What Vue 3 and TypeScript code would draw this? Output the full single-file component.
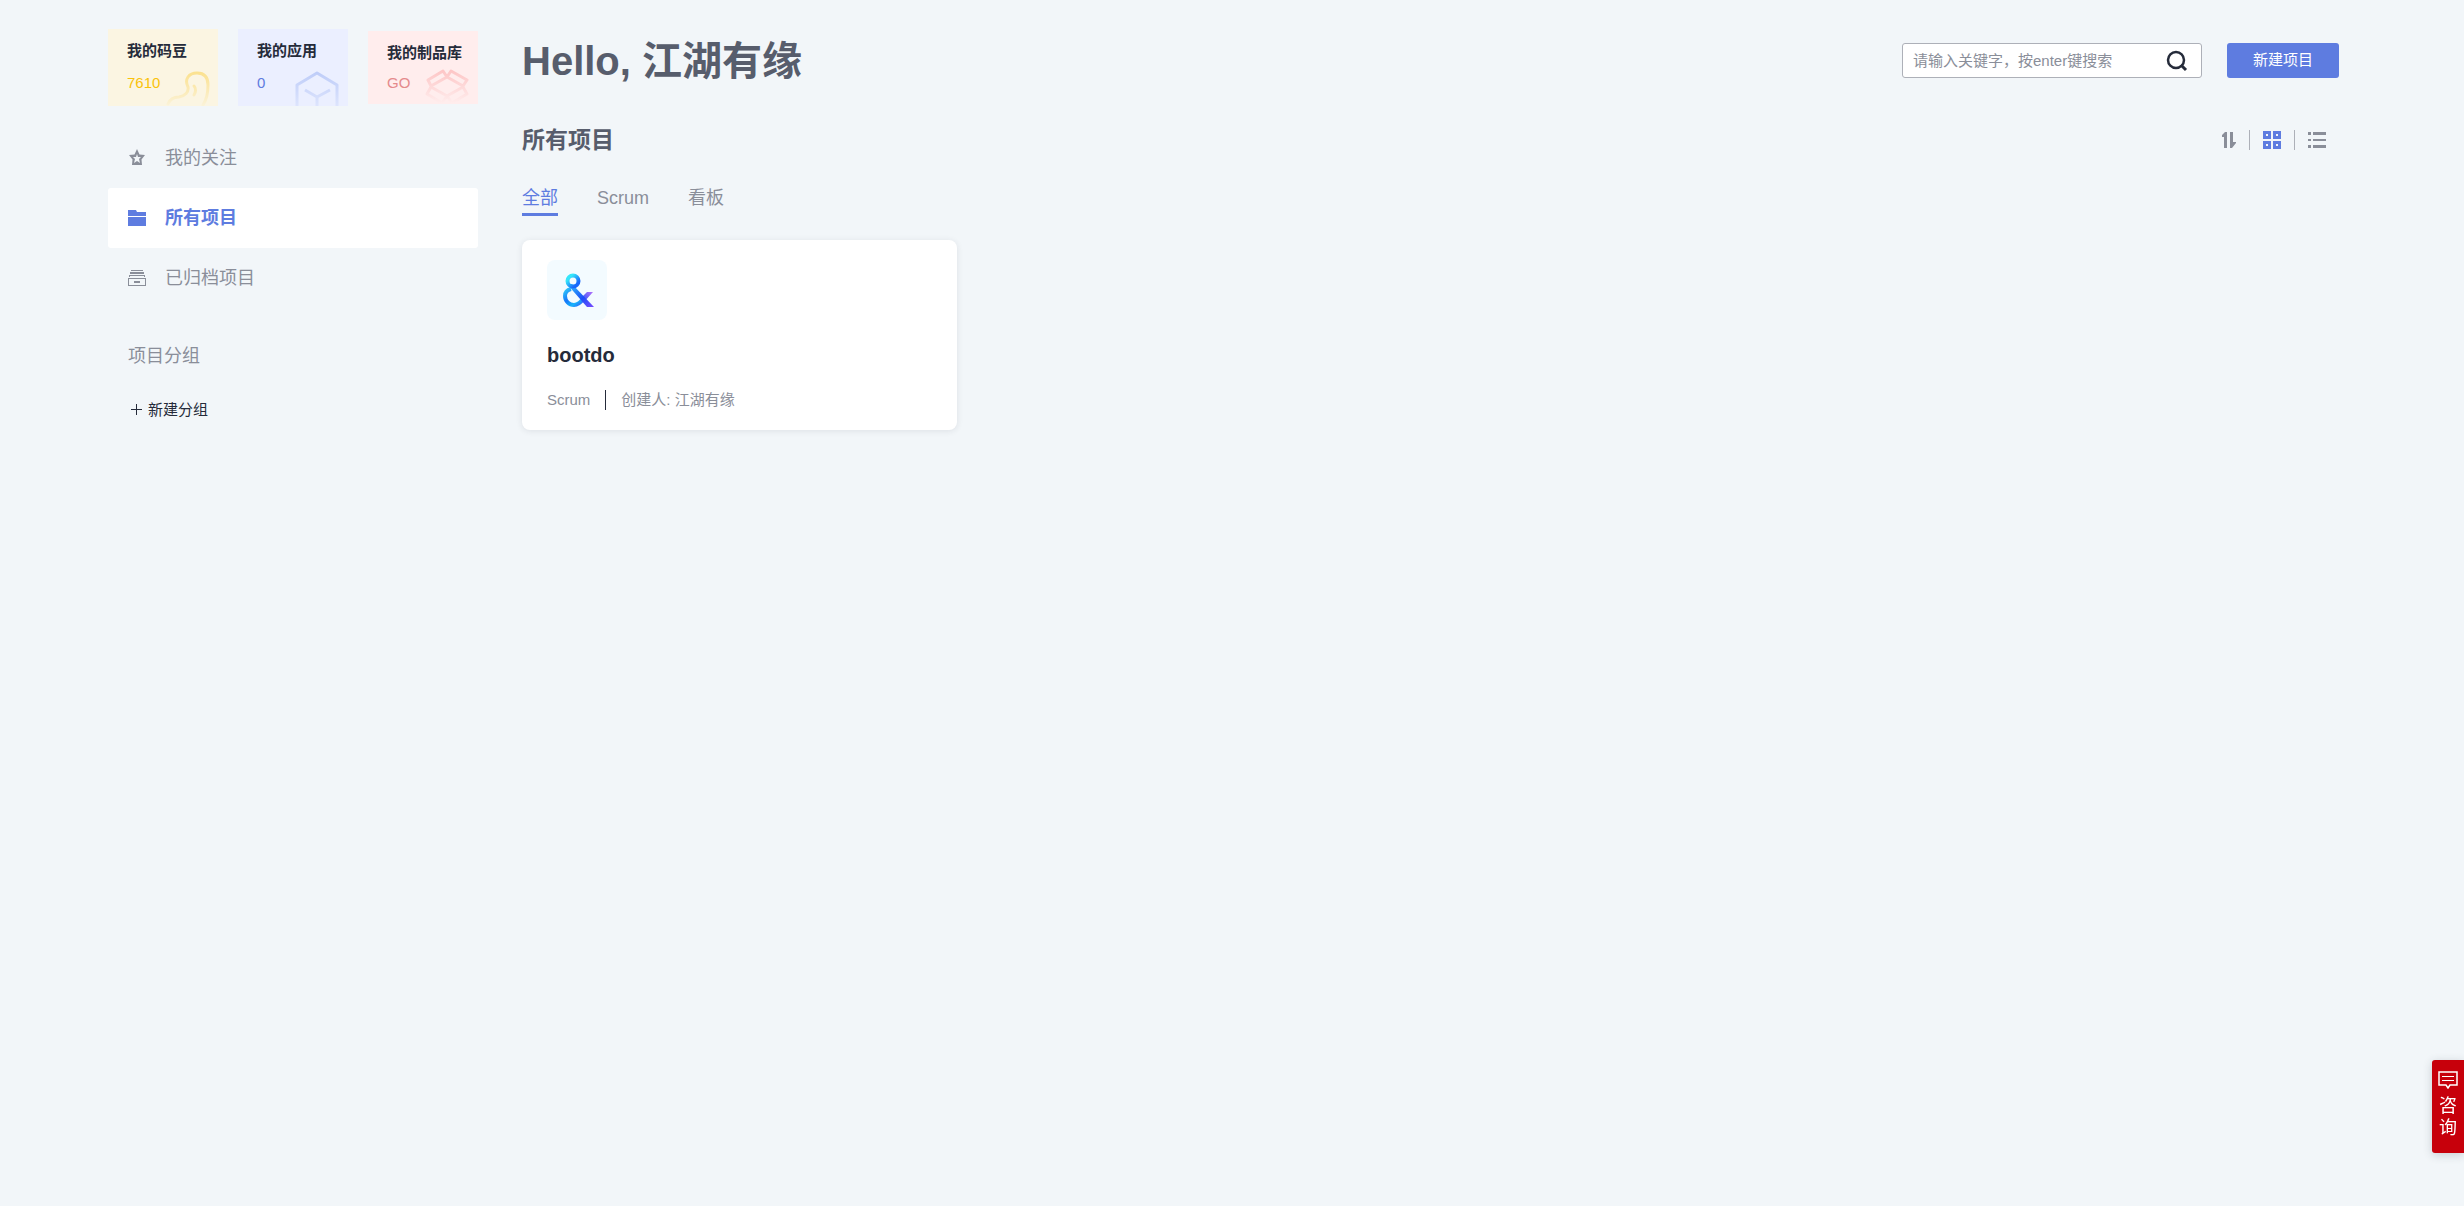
<script setup lang="ts">
import { ref } from 'vue'

interface Tile {
  key: string
  title: string
  value: string
}

interface Tab {
  key: string
  label: string
}

const tiles: Tile[] = [
  { key: 'bean', title: '我的码豆', value: '7610' },
  { key: 'app', title: '我的应用', value: '0' },
  { key: 'repo', title: '我的制品库', value: 'GO' },
]

const tabs: Tab[] = [
  { key: 'all', label: '全部' },
  { key: 'scrum', label: 'Scrum' },
  { key: 'kanban', label: '看板' },
]

const activeTab = ref('all')
const keyword = ref('')
</script>

<template>
  <div class="page">
    <aside class="side">
      <div class="tiles">
        <a v-for="tile in tiles" :key="tile.key" href="#" class="tile" :class="tile.key">
          <span class="tile-title">{{ tile.title }}</span>
          <span class="tile-value">{{ tile.value }}</span>
          <svg v-if="tile.key === 'bean'" class="tile-art" width="46" height="38" viewBox="0 0 46 38" fill="none" stroke-width="3" stroke-linecap="round">
            <defs>
              <linearGradient id="beanFade" gradientUnits="userSpaceOnUse" x1="0" y1="2" x2="0" y2="38">
                <stop offset="0" stop-color="#fbe08a" />
                <stop offset="1" stop-color="#fbe08a" stop-opacity="0.1" />
              </linearGradient>
            </defs>
            <path d="M3 36C5 31 9 29 14 29C20 28 24 24 23 19C19 11 24 5 32 5C40 5 43 10 43 17C43 25 42 31 38 37" stroke="url(#beanFade)" />
            <path d="M29 18C31 20 31 24 29 27" stroke="url(#beanFade)" />
          </svg>
          <svg v-else-if="tile.key === 'app'" class="tile-art" width="46" height="38" viewBox="0 0 46 38" fill="none" stroke-width="3" stroke-linejoin="round">
            <defs>
              <linearGradient id="appFade" gradientUnits="userSpaceOnUse" x1="0" y1="2" x2="0" y2="40">
                <stop offset="0" stop-color="#bccbf8" />
                <stop offset="1" stop-color="#bccbf8" stop-opacity="0.25" />
              </linearGradient>
            </defs>
            <path d="M2 40V17L22 5L42 17V40M10 22L22 29L35 22M22 29V40" stroke="url(#appFade)" />
          </svg>
          <svg v-else class="tile-art" width="46" height="38" viewBox="0 0 46 38" fill="none" stroke-width="3" stroke-linejoin="round">
            <defs>
              <linearGradient id="repoFade" gradientUnits="userSpaceOnUse" x1="0" y1="2" x2="0" y2="37">
                <stop offset="0" stop-color="#fdc3c3" />
                <stop offset="1" stop-color="#fdc3c3" stop-opacity="0" />
              </linearGradient>
            </defs>
            <path d="M18 5L3 14L6 20L22 11ZM26 5L42 14L38 20L22 11ZM6 21L22 30L38 21M6 21L2 28L17 37L22 30L27 37L42 28L38 21" stroke="url(#repoFade)" />
          </svg>
        </a>
      </div>

      <nav class="nav">
        <a href="#" class="nav-item">
          <svg width="18" height="18" viewBox="0 0 18 18" fill="#8a8e99" fill-rule="evenodd">
            <path d="M9 0L11.500 5.500L17 6L13.500 10.500L14 16H4L4.500 10.500L1 6L6.500 5.500ZM9 5L8 8H5L7 10L6 14L9 12L12 14L11 10L13 8H10Z" />
          </svg>
          我的关注
        </a>
        <a href="#" class="nav-item active">
          <svg width="18" height="18" viewBox="0 0 18 18" fill="#5e7ce0">
            <path d="M0 1H8L9 3H18V7H0ZM0 8H18V17H0Z" />
          </svg>
          所有项目
        </a>
        <a href="#" class="nav-item">
          <svg width="18" height="18" viewBox="0 0 18 18" fill="#8a8e99">
            <path d="M3 1H15V2H3ZM2 3H16V5H2ZM1 6H17V8H16V7H2V8H1Z" />
            <path d="M0 9H18V17H0ZM1 10V16H17V10Z" fill-rule="evenodd" />
            <path d="M6 12H12V14H6Z" />
          </svg>
          已归档项目
        </a>
      </nav>

      <h2 class="group-title">项目分组</h2>
      <button type="button" class="group-add">
        <svg width="12" height="12" viewBox="0 0 12 12" fill="#252b3a">
          <path d="M5 0H6V5H11V6H6V11H5V6H0V5H5Z" />
        </svg>
        新建分组
      </button>
    </aside>

    <main class="main">
      <header class="head">
        <h1 class="hello">Hello, 江湖有缘</h1>
        <div class="actions">
          <div class="search">
            <input v-model="keyword" type="text" aria-label="搜索项目" placeholder="请输入关键字，按enter键搜索" />
            <button type="button" class="icon-btn" aria-label="搜索">
              <svg width="22" height="22" viewBox="0 0 22 22" fill="none" stroke="#252b3a" stroke-width="2.500">
                <circle cx="10" cy="10" r="8" />
                <path d="M15 15L20 20" stroke-width="3" />
              </svg>
            </button>
          </div>
          <button type="button" class="primary">新建项目</button>
        </div>
      </header>

      <div class="bar">
        <h2 class="section-title">所有项目</h2>
        <div class="views">
          <button type="button" class="icon-btn" aria-label="排序">
            <svg width="14" height="18" viewBox="0 0 14 18" fill="#8a8e99">
              <path d="M3 1H5V17H2V6H0V4ZM8 1H11V11H14V12L10 17H8Z" />
            </svg>
          </button>
          <span class="sep"></span>
          <button type="button" class="icon-btn" aria-label="卡片视图">
            <svg width="18" height="18" viewBox="0 0 18 18" fill="#5e7ce0" fill-rule="evenodd">
              <path d="M0 0H8V8H0ZM3 3V5H5V3ZM10 0H18V8H10ZM13 3V5H15V3ZM0 10H8V18H0ZM3 13V15H5V13ZM10 10H18V18H10ZM13 13V15H15V13Z" />
            </svg>
          </button>
          <span class="sep"></span>
          <button type="button" class="icon-btn" aria-label="列表视图">
            <svg width="18" height="18" viewBox="0 0 18 18" fill="#8a8e99">
              <path d="M0 1H3V4H0ZM5 1H18V4H5ZM0 8H3V10H0ZM5 8H18V10H5ZM0 14H3V17H0ZM5 14H18V17H5Z" />
            </svg>
          </button>
        </div>
      </div>

      <div class="tabs">
        <button
          v-for="tab in tabs"
          :key="tab.key"
          type="button"
          class="tab"
          :class="{ active: tab.key === activeTab }"
          @click="activeTab = tab.key"
        >
          {{ tab.label }}
        </button>
      </div>

      <section class="cards">
        <article class="card">
          <div class="logo">
            <svg width="60" height="60" viewBox="0 0 60 60" fill="none" stroke-width="4">
              <defs>
                <linearGradient id="ampTop" x1="0" y1="0" x2="1" y2="1">
                  <stop offset="0.200" stop-color="#35e6fa" />
                  <stop offset="0.800" stop-color="#1767fb" />
                </linearGradient>
                <linearGradient id="ampBowl" x1="0" y1="0" x2="1" y2="1">
                  <stop offset="0" stop-color="#2fc8f8" />
                  <stop offset="0.400" stop-color="#1677fa" />
                  <stop offset="0.700" stop-color="#16b4fa" />
                  <stop offset="1" stop-color="#3450fa" />
                </linearGradient>
                <linearGradient id="ampLeg" x1="0" y1="0" x2="1" y2="1">
                  <stop offset="0" stop-color="#33d0fb" />
                  <stop offset="0.600" stop-color="#1c4df8" />
                  <stop offset="1" stop-color="#7a4bff" />
                </linearGradient>
                <linearGradient id="ampArm" gradientUnits="userSpaceOnUse" x1="35" y1="41" x2="45" y2="32">
                  <stop offset="0" stop-color="#2456f8" />
                  <stop offset="1" stop-color="#b070fa" />
                </linearGradient>
              </defs>
              <path d="M24 29C20 30 18 32 18 36C18 41 22 45 27 45C31 45 34 42 37 38" stroke="url(#ampBowl)" />
              <path d="M34 38L40 32H46L37 42Z" fill="url(#ampArm)" stroke="none" />
              <path d="M20 24L25 24L47 47H40Z" fill="url(#ampLeg)" stroke="none" />
              <circle cx="26" cy="21" r="5.500" stroke="url(#ampTop)" />
            </svg>
          </div>
          <h3 class="card-name">bootdo</h3>
          <div class="meta">
            <span>Scrum</span>
            <span class="meta-sep"></span>
            <span>创建人: 江湖有缘</span>
          </div>
        </article>
      </section>
    </main>

    <button type="button" class="consult">
      <svg width="20" height="18" viewBox="0 0 20 18" fill="none" stroke="#fff">
        <path d="M1 1H19V14H12L10 17L8 14H1Z" stroke-width="1.500" />
        <path d="M4 5.500H16M4 9.500H16" />
      </svg>
      <span>咨</span>
      <span>询</span>
    </button>
  </div>
</template>

<style>
body {
  margin: 0;
  background: #f2f6f9;
}
</style>

<style scoped>
.page {
  box-sizing: border-box;
  display: flex;
  gap: 44px;
  min-height: 100vh;
  padding: 29px 125px 0 108px;
  background: #f2f6f9;
  color: #8a8e99;
  font-family: 'Liberation Sans', 'Noto Sans CJK SC', sans-serif;
  font-size: 15px;
  line-height: 20px;
}

button,
input {
  margin: 0;
  padding: 0;
  border: 0;
  background: none;
  color: inherit;
  font: inherit;
}

button {
  cursor: pointer;
}

a {
  color: inherit;
  text-decoration: none;
}

h1,
h2,
h3 {
  margin: 0;
}

svg {
  display: block;
  flex: none;
}

.side {
  flex: none;
  width: 370px;
}

.tiles {
  display: flex;
  align-items: center;
  gap: 20px;
}

.tile {
  position: relative;
  box-sizing: border-box;
  display: flex;
  flex: 1;
  flex-direction: column;
  gap: 12px;
  height: 77px;
  padding: 12px 0 0 19px;
  overflow: hidden;
}

.tile-title {
  color: #252b3a;
  font-weight: 700;
  white-space: nowrap;
}

.tile-art {
  position: absolute;
  right: 7px;
  bottom: 0;
}

.bean {
  background: #fbf5e2;
}

.bean .tile-value {
  color: #fac20a;
}

.app {
  background: #ebefff;
}

.app .tile-value {
  color: #5e7ce0;
}

.repo {
  gap: 10px;
  height: 73px;
  background: #ffeded;
}

.repo .tile-value {
  color: #e58a8c;
}

.nav {
  margin-top: 22px;
}

.nav-item {
  display: flex;
  align-items: center;
  gap: 19px;
  height: 60px;
  padding: 0 20px;
  border-radius: 3px;
  font-size: 18px;
}

.nav-item.active {
  background: #fff;
  color: #5e7ce0;
  font-weight: 700;
}

.group-title {
  margin: 38px 0 0 20px;
  font-size: 18px;
  font-weight: 400;
}

.group-add {
  display: flex;
  align-items: center;
  gap: 5px;
  margin: 34px 0 0 23px;
  color: #252b3a;
}

.main {
  flex: 1;
  min-width: 0;
}

.head {
  display: flex;
  align-items: center;
  justify-content: space-between;
  height: 63px;
}

.hello {
  color: #575d6c;
  font-size: 40px;
  line-height: 62px;
}

.actions {
  display: flex;
  gap: 25px;
}

.search {
  box-sizing: border-box;
  display: flex;
  align-items: center;
  width: 300px;
  height: 35px;
  padding: 0 13px 0 10px;
  border: 1px solid #adb0b8;
  border-radius: 3px;
  background: #fff;
}

.search input {
  flex: 1;
  min-width: 0;
  outline: none;
}

.search input::placeholder {
  color: #8a8e99;
  opacity: 1;
}

.primary {
  width: 112px;
  height: 35px;
  padding-bottom: 2px;
  border-radius: 3px;
  background: #5e7ce0;
  color: #fff;
}

.bar {
  display: flex;
  align-items: center;
  justify-content: space-between;
  margin-top: 33px;
}

.section-title {
  color: #575d6c;
  font-size: 23px;
  line-height: 30px;
}

.views {
  display: flex;
  align-items: center;
  gap: 13px;
  padding-right: 13px;
}

.sep {
  width: 1px;
  height: 20px;
  background: #adb0b8;
}

.tabs {
  display: flex;
  gap: 39px;
  margin-top: 30px;
}

.tab {
  height: 31px;
  padding-bottom: 2px;
  border-bottom: 3px solid transparent;
  font-size: 18px;
}

.tab.active {
  border-color: #5e7ce0;
  color: #5e7ce0;
}

.cards {
  display: flex;
  flex-wrap: wrap;
  gap: 20px;
  margin-top: 24px;
}

.card {
  box-sizing: border-box;
  width: 435px;
  padding: 20px 25px;
  border-radius: 8px;
  background: #fff;
  box-shadow: 0 1px 6px rgba(37, 43, 58, 0.1);
}

.logo {
  width: 60px;
  height: 60px;
  border-radius: 8px;
  background: #f3fbff;
}

.card-name {
  margin-top: 20px;
  color: #252b3a;
  font-size: 20px;
  line-height: 30px;
}

.meta {
  display: flex;
  align-items: center;
  gap: 15px;
  margin-top: 20px;
}

.meta-sep {
  width: 1px;
  height: 20px;
  background: #252b3a;
}

.consult {
  position: fixed;
  right: 0;
  bottom: 53px;
  display: flex;
  flex-direction: column;
  align-items: center;
  width: 32px;
  padding: 11px 0 14px;
  border-radius: 3px 0 0 3px;
  background: #c7000b;
  box-shadow: 0 2px 10px rgba(37, 43, 58, 0.2);
  color: #fff;
  font-size: 18px;
  line-height: 22px;
}

.consult svg {
  margin-bottom: 6px;
}
</style>
